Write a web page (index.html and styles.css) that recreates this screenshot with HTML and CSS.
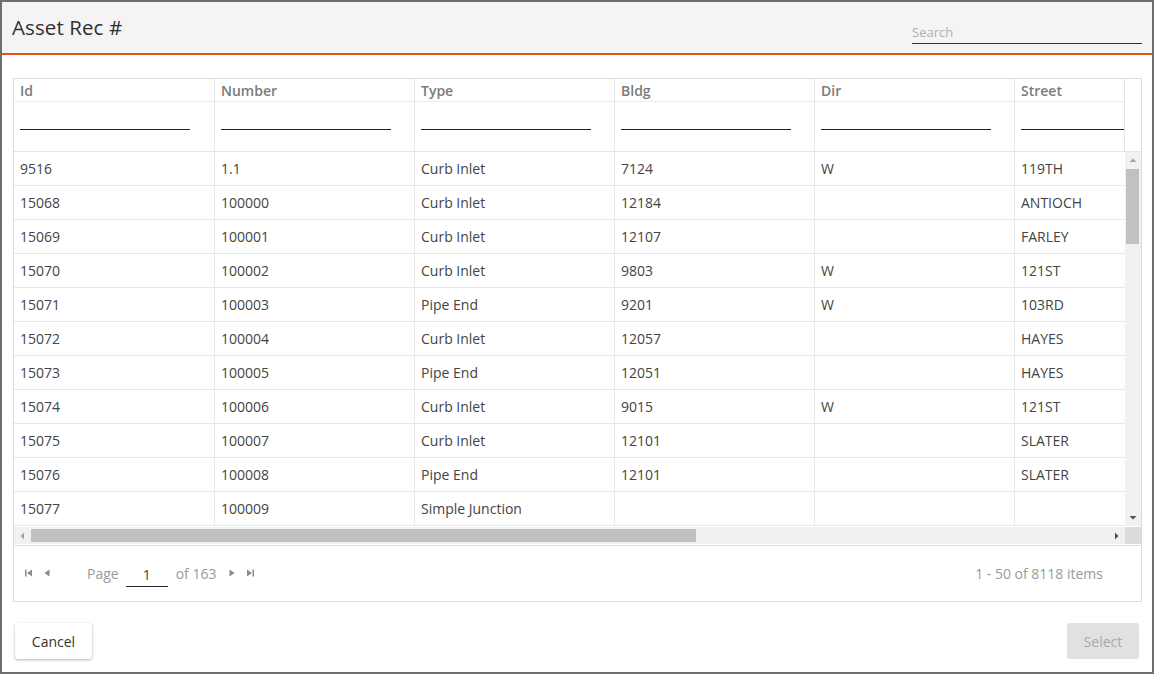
FILE: index.html
```html
<!DOCTYPE html>
<html>
<head>
<meta charset="utf-8">
<link rel="stylesheet" href="styles.css">
</head>
<body>
<div class="dialog">
  <div class="dlg-head">
    <h1 class="title">Asset Rec #</h1>
    <div class="search">Search</div>
  </div>
  <div class="dlg-body">
    <div class="grid">
      <div class="grid-head">
        <div class="head-cols">
          <div class="hrow names">
            <div class="cell">Id</div><div class="cell">Number</div><div class="cell">Type</div><div class="cell">Bldg</div><div class="cell">Dir</div><div class="cell">Street</div>
          </div>
          <div class="hrow filters">
            <div class="cell"><span class="fline"></span></div><div class="cell"><span class="fline"></span></div><div class="cell"><span class="fline"></span></div><div class="cell"><span class="fline"></span></div><div class="cell"><span class="fline"></span></div><div class="cell"><span class="fline"></span></div>
          </div>
        </div>
        <div class="head-spacer"></div>
      </div>
      <div class="grid-main">
        <div class="body-cols">
          <div class="row"><div class="cell">9516</div><div class="cell">1.1</div><div class="cell">Curb Inlet</div><div class="cell">7124</div><div class="cell">W</div><div class="cell">119TH</div></div>
          <div class="row"><div class="cell">15068</div><div class="cell">100000</div><div class="cell">Curb Inlet</div><div class="cell">12184</div><div class="cell"></div><div class="cell">ANTIOCH</div></div>
          <div class="row"><div class="cell">15069</div><div class="cell">100001</div><div class="cell">Curb Inlet</div><div class="cell">12107</div><div class="cell"></div><div class="cell">FARLEY</div></div>
          <div class="row"><div class="cell">15070</div><div class="cell">100002</div><div class="cell">Curb Inlet</div><div class="cell">9803</div><div class="cell">W</div><div class="cell">121ST</div></div>
          <div class="row"><div class="cell">15071</div><div class="cell">100003</div><div class="cell">Pipe End</div><div class="cell">9201</div><div class="cell">W</div><div class="cell">103RD</div></div>
          <div class="row"><div class="cell">15072</div><div class="cell">100004</div><div class="cell">Curb Inlet</div><div class="cell">12057</div><div class="cell"></div><div class="cell">HAYES</div></div>
          <div class="row"><div class="cell">15073</div><div class="cell">100005</div><div class="cell">Pipe End</div><div class="cell">12051</div><div class="cell"></div><div class="cell">HAYES</div></div>
          <div class="row"><div class="cell">15074</div><div class="cell">100006</div><div class="cell">Curb Inlet</div><div class="cell">9015</div><div class="cell">W</div><div class="cell">121ST</div></div>
          <div class="row"><div class="cell">15075</div><div class="cell">100007</div><div class="cell">Curb Inlet</div><div class="cell">12101</div><div class="cell"></div><div class="cell">SLATER</div></div>
          <div class="row"><div class="cell">15076</div><div class="cell">100008</div><div class="cell">Pipe End</div><div class="cell">12101</div><div class="cell"></div><div class="cell">SLATER</div></div>
          <div class="row"><div class="cell">15077</div><div class="cell">100009</div><div class="cell">Simple Junction</div><div class="cell"></div><div class="cell"></div><div class="cell"></div></div>
        </div>
        <div class="vscroll">
          <svg class="arr" width="16" height="16" viewBox="0 0 16 16"><path d="M4.5 10 L8 6.5 L11.5 10 Z" fill="#a3a3a3"/></svg>
          <div class="vtrack"><div class="vthumb"></div></div>
          <svg class="arr" width="16" height="16" viewBox="0 0 16 16"><path d="M4.5 6 L8 9.5 L11.5 6 Z" fill="#505050"/></svg>
        </div>
      </div>
      <div class="hscroll">
        <div class="htrack-wrap">
          <svg class="arr" width="16" height="16" viewBox="0 0 16 16"><path d="M10 4.5 L6.5 8 L10 11.5 Z" fill="#a3a3a3"/></svg>
          <div class="htrack"><div class="hthumb"></div></div>
          <svg class="arr" width="16" height="16" viewBox="0 0 16 16"><path d="M6 4.5 L9.5 8 L6 11.5 Z" fill="#505050"/></svg>
        </div>
        <div class="corner"></div>
      </div>
      <div class="pager">
        <div class="pager-left">
          <svg class="pico" width="14" height="14" viewBox="0 0 14 14"><rect x="3" y="3.5" width="1.5" height="7" fill="#8a8a8a"/><path d="M10 3.5 L5 7 L10 10.5 Z" fill="#8a8a8a"/></svg>
          <svg class="pico" width="14" height="14" viewBox="0 0 14 14"><path d="M9.5 3.5 L4.5 7 L9.5 10.5 Z" fill="#8a8a8a"/></svg>
          <span class="plabel">Page</span>
          <span class="pinput">1</span>
          <span class="plabel of">of 163</span>
          <svg class="pico" width="14" height="14" viewBox="0 0 14 14"><path d="M4.5 3.5 L9.5 7 L4.5 10.5 Z" fill="#8a8a8a"/></svg>
          <svg class="pico" width="14" height="14" viewBox="0 0 14 14"><path d="M4 3.5 L9 7 L4 10.5 Z" fill="#8a8a8a"/><rect x="9.5" y="3.5" width="1.5" height="7" fill="#8a8a8a"/></svg>
        </div>
        <div class="pinfo">1 - 50 of 8118 items</div>
      </div>
    </div>
  </div>
  <div class="dlg-foot">
    <button class="btn cancel">Cancel</button>
    <button class="btn select">Select</button>
  </div>
</div>
</body>
</html>
```
FILE: styles.css
```css
html, body {
  margin: 0;
  padding: 0;
}
body {
  background: #6e6e6e;
  width: 1154px;
  height: 674px;
  overflow: hidden;
  font-family: "Open Sans", "Liberation Sans", sans-serif;
  padding: 2px;
  box-sizing: border-box;
}
.dialog {
  width: 1150px;
  height: 670px;
  background: #fff;
  display: flex;
  flex-direction: column;
}
.dlg-head {
  height: 51px;
  flex: none;
  background: #f4f4f4;
  border-bottom: 2px solid #e5521e;
  display: flex;
  align-items: center;
  justify-content: space-between;
  padding: 0 10px 0 10px;
}
.title {
  margin: 0;
  font-size: 20.5px;
  font-weight: 400;
  color: #2f2f2f;
  letter-spacing: 0.1px;
  padding-bottom: 2px;
}
.search {
  width: 230px;
  height: 22px;
  margin-top: 10px;
  border-bottom: 1px solid #333;
  font-size: 13px;
  color: #b0b0b0;
  line-height: 20px;
  box-sizing: border-box;
}
.dlg-body {
  padding: 23px 10px 0 11px;
}
.grid {
  border: 1px solid #dcdcdc;
  width: 1129px;
  box-sizing: border-box;
  display: flex;
  flex-direction: column;
  font-size: 14px;
  color: #444;
}
.grid-head {
  display: flex;
  border-bottom: 1px solid #e4e4e4;
}
.head-cols {
  width: 1110px;
  overflow: hidden;
}
.head-spacer {
  width: 16px;
  border-left: 1px solid #e4e4e4;
}
.hrow {
  display: flex;
  width: 1200px;
}
.cell {
  width: 200px;
  flex: none;
  box-sizing: border-box;
  padding-left: 6px;
  border-left: 1px solid #e8e8e8;
  white-space: nowrap;
  overflow: hidden;
}
.hrow .cell:first-child,
.row .cell:first-child {
  border-left: none;
}
.names .cell {
  height: 23px;
  line-height: 23px;
  font-weight: 600;
  color: #7b7b7b;
  border-bottom: 1px solid #ececec;
}
.filters .cell {
  height: 49px;
}
.fline {
  display: block;
  width: 170px;
  height: 1px;
  background: #222;
  margin-top: 27px;
}
.grid-main {
  display: flex;
  height: 374px;
}
.body-cols {
  width: 1111px;
  overflow: hidden;
}
.row {
  display: flex;
  width: 1200px;
}
.row .cell {
  height: 34px;
  line-height: 33px;
  border-bottom: 1px solid #e8e8e8;
}
.vscroll {
  width: 16px;
  background: #f1f1f1;
  display: flex;
  flex-direction: column;
}
.arr {
  display: block;
  flex: none;
}
.vtrack {
  flex: 1;
  padding: 1px 2px 0 1px;
}
.vthumb {
  height: 75px;
  background: #c1c1c1;
}
.hscroll {
  display: flex;
  height: 20px;
  padding-top: 1px;
  border-bottom: 1px solid #dedede;
  box-sizing: border-box;
}
.htrack-wrap {
  width: 1111px;
  display: flex;
  align-items: center;
  background: #f1f1f1;
  height: 17px;
}
.htrack {
  flex: 1;
  padding: 2px 0 2px 1px;
}
.hthumb {
  width: 665px;
  height: 13px;
  background: #c1c1c1;
}
.corner {
  width: 16px;
  height: 17px;
  background: #dcdcdc;
}
.pager {
  height: 55px;
  display: flex;
  align-items: center;
  justify-content: space-between;
  padding: 0 38px 0 8px;
  font-size: 14px;
}
.pager-left {
  display: flex;
  align-items: center;
  margin-top: -1px;
}
.pico {
  display: block;
  margin-right: 4px;
}
.pager-left .pico:nth-child(2) {
  margin-right: 33px;
}
.plabel {
  color: #9a9a9a;
}
.pinput {
  width: 42px;
  margin: 4px 8px 0 7px;
  text-align: center;
  color: #444;
  border-bottom: 1px solid #222;
  line-height: 22px;
}
.of {
  margin-right: 9px;
}
.pinfo {
  color: #9a9a9a;
  margin-top: -1px;
}
.dlg-foot {
  display: flex;
  justify-content: space-between;
  padding: 21px 13px 0 13px;
}
.btn {
  height: 36px;
  border: none;
  border-radius: 3px;
  font-family: "Open Sans", "Liberation Sans", sans-serif;
  font-size: 14px;
  padding: 0;
}
.cancel {
  width: 77px;
  background: #fff;
  color: #333;
  font-weight: 500;
  box-shadow: 0 1px 3px rgba(0,0,0,0.3);
}
.select {
  width: 72px;
  background: #e1e1e1;
  color: #a9a9a9;
}
```
